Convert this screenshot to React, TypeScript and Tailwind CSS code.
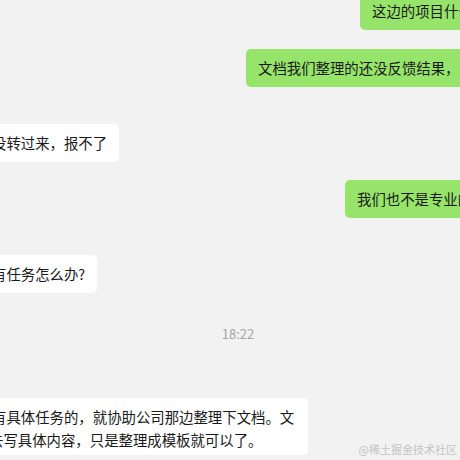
import React from 'react';

const font = { fontFamily: '"Noto Sans CJK SC", "Noto Sans", sans-serif' };

const Mine = ({ text, left, className = '' }: { text: string; left: string; className?: string }) => (
  <div className={`flex ${left} ${className}`}>
    <div className="whitespace-nowrap rounded-[5px] bg-[#97e46b] px-[12px] py-[7px] text-[14.4px] leading-[24px] text-[#191919]">
      {text}
    </div>
  </div>
);

const Theirs = ({ text, className = '' }: { text: string; className?: string }) => (
  <div className={`flex ml-[-20px] ${className}`}>
    <div className="whitespace-nowrap rounded-[5px] bg-white px-[12px] py-[7px] text-[14.4px] leading-[24px] text-[#191919]">
      {text}
    </div>
  </div>
);

export default function App() {
  return (
    <div className="relative h-[460px] w-[460px] overflow-hidden bg-[#f2f2f2]" style={font}>
      <div className="flex flex-col mt-[-8px]">
        <Mine text="这边的项目什么时候开始呀" left="pl-[360px]" />
        <Mine text="文档我们整理的还没反馈结果，先等等吧" left="pl-[246px]" className="mt-[19px]" />
        <Theirs text="没转过来，报不了" className="mt-[37px]" />
        <Mine text="我们也不是专业的测试团队" left="pl-[345px]" className="mt-[18px]" />
        <Theirs text="有任务怎么办?" className="mt-[37px]" />
        <div className="mt-[32px] text-center text-[13px] leading-[18px] text-[#a6a6a6] pl-[16px]">18:22</div>
        <div className="flex ml-[-20px] mt-[55px]">
          <div className="w-[328px] rounded-[5px] bg-white px-[12px] pt-[7px] pb-[4px] text-[14.4px] leading-[23px] text-[#191919]">
            <div className="whitespace-nowrap">有具体任务的，就协助公司那边整理下文档。文</div>
            <div className="whitespace-nowrap ml-[-3px]">去写具体内容，只是整理成模板就可以了。</div>
          </div>
        </div>
      </div>
      <div className="absolute bottom-[4px] right-[3px] text-[11px] leading-[14px] text-[#c4c4c4]">@稀土掘金技术社区</div>
    </div>
  );
}
